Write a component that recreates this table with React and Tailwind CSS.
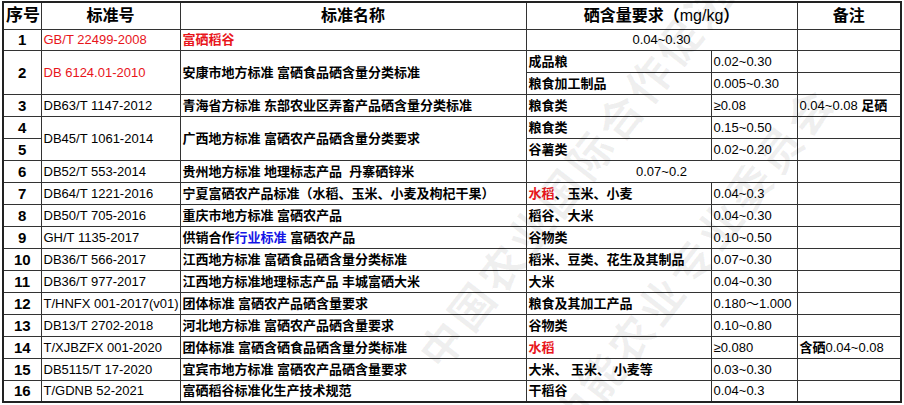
import React from 'react';

const td = 'border border-[#333] px-[2px] leading-none whitespace-nowrap overflow-hidden';
const num = `${td} text-center font-bold text-[15px]`;
const code = `${td} text-[13px]`;
const cn = `${td} font-bold text-[13px]`;
const val = `${td} text-[13px]`;

function Row({ n, c, name, food, v, note, foodNode, nameNode }) {
  return (
    <tr className="h-[22px]">
      <td className={num}>{n}</td>
      <td className={code}>{c}</td>
      <td className={cn}>{nameNode || name}</td>
      <td className={cn}>{foodNode || food}</td>
      <td className={val}>{v}</td>
      <td className={val}>{note}</td>
    </tr>
  );
}

export default function App() {
  return (
    <div className="relative w-[904px] h-[405px] bg-white overflow-hidden text-black font-['Liberation_Sans','Noto_Sans_CJK_SC',sans-serif]">
      <div className="pl-[2px] pt-[1px]">
        <table className="table-fixed border-collapse w-[898px] border-2 border-[#222]">
          <colgroup>
            <col className="w-[38px]" />
            <col className="w-[139px]" />
            <col className="w-[346px]" />
            <col className="w-[185px]" />
            <col className="w-[86px]" />
            <col className="w-[104px]" />
          </colgroup>
          <thead>
            <tr className="h-[27px] font-bold text-[16px]">
              <th className={`${td} text-center text-[17px]`}>序号</th>
              <th className={`${td} text-center`}>标准号</th>
              <th className={`${td} text-center`}>标准名称</th>
              <th colSpan={2} className={`${td} text-center`}>
                硒含量要求（<span className="font-normal">mg/kg</span>）
              </th>
              <th className={`${td} text-center`}>备注</th>
            </tr>
          </thead>
          <tbody>
            <tr className="h-[21px]">
              <td className={num}>1</td>
              <td className={`${code} text-[#e8141b]`}>GB/T 22499-2008</td>
              <td className={`${cn} text-[#e8141b]`}>富硒稻谷</td>
              <td colSpan={2} className={`${val} text-center`}>0.04~0.30</td>
              <td className={val}></td>
            </tr>
            <tr className="h-[22px]">
              <td rowSpan={2} className={num}>2</td>
              <td rowSpan={2} className={`${code} text-[#e8141b]`}>DB 6124.01-2010</td>
              <td rowSpan={2} className={cn}>安康市地方标准 富硒食品硒含量分类标准</td>
              <td className={cn}>成品粮</td>
              <td className={val}>0.02~0.30</td>
              <td className={val}></td>
            </tr>
            <tr className="h-[22px]">
              <td className={cn}>粮食加工制品</td>
              <td className={val}>0.005~0.30</td>
              <td className={val}></td>
            </tr>
            <tr className="h-[22px]">
              <td className={num}>3</td>
              <td className={code}>DB63/T 1147-2012</td>
              <td className={cn}>青海省方标准 东部农业区弄畜产品硒含量分类标准</td>
              <td className={cn}>粮食类</td>
              <td className={val}>≥0.08</td>
              <td className={val}>0.04~0.08 <span className="font-bold">足硒</span></td>
            </tr>
            <tr className="h-[22px]">
              <td className={num}>4</td>
              <td rowSpan={2} className={code}>DB45/T 1061-2014</td>
              <td rowSpan={2} className={cn}>广西地方标准 富硒农产品硒含量分类要求</td>
              <td className={cn}>粮食类</td>
              <td className={val}>0.15~0.50</td>
              <td className={val}></td>
            </tr>
            <tr className="h-[22px]">
              <td className={num}>5</td>
              <td className={cn}>谷薯类</td>
              <td className={val}>0.02~0.20</td>
              <td className={val}></td>
            </tr>
            <tr className="h-[22px]">
              <td className={num}>6</td>
              <td className={code}>DB52/T 553-2014</td>
              <td className={cn}>贵州地方标准 地理标志产品&nbsp;&nbsp;丹寨硒锌米</td>
              <td colSpan={2} className={`${val} text-center`}>0.07~0.2</td>
              <td className={val}></td>
            </tr>
            <Row n="7" c="DB64/T 1221-2016" name="宁夏富硒农产品标准（水稻、玉米、小麦及枸杞干果）"
              foodNode={<><span className="text-[#e8141b]">水稻</span>、玉米、小麦</>} v="0.04~0.3" />
            <Row n="8" c="DB50/T 705-2016" name="重庆市地方标准 富硒农产品" food="稻谷、大米" v="0.04~0.30" />
            <Row n="9" c="GH/T 1135-2017"
              nameNode={<>供销合作<span className="text-[#1414e6]">行业标准</span> 富硒农产品</>} food="谷物类" v="0.10~0.50" />
            <Row n="10" c="DB36/T 566-2017" name="江西地方标准 富硒食品硒含量分类标准" food="稻米、豆类、花生及其制品" v="0.07~0.30" />
            <Row n="11" c="DB36/T 977-2017" name="江西地方标准地理标志产品 丰城富硒大米" food="大米" v="0.04~0.30" />
            <Row n="12" c="T/HNFX 001-2017(v01)" name="团体标准 富硒农产品硒含量要求" food="粮食及其加工产品" v="0.180～1.000" />
            <Row n="13" c="DB13/T 2702-2018" name="河北地方标准 富硒农产品硒含量要求" food="谷物类" v="0.10~0.80" />
            <Row n="14" c="T/XJBZFX 001-2020" name="团体标准 富硒含硒食品硒含量分类标准"
              foodNode={<span className="text-[#e8141b]">水稻</span>} v="≥0.080"
              note={<><span className="font-bold">含硒</span>0.04~0.08</>} />
            <Row n="15" c="DB5115/T 17-2020" name="宜宾市地方标准 富硒农产品硒含量要求" food="大米、 玉米、 小麦等" v="0.03~0.30" />
            <Row n="16" c="T/GDNB 52-2021" name="富硒稻谷标准化生产技术规范" food="干稻谷" v="0.04~0.3" />
          </tbody>
        </table>
      </div>
      {/* watermark */}
      <div className="pointer-events-none absolute left-[430px] top-[330px] -rotate-[52deg] origin-left text-[44px] font-bold tracking-[4px] text-black/[0.06] whitespace-nowrap">
        中国农业国际合作促进会
      </div>
      <div className="pointer-events-none absolute left-[560px] top-[400px] -rotate-[52deg] origin-left text-[44px] font-bold tracking-[4px] text-black/[0.06] whitespace-nowrap">
        功能农业专业委员会
      </div>
    </div>
  );
}
